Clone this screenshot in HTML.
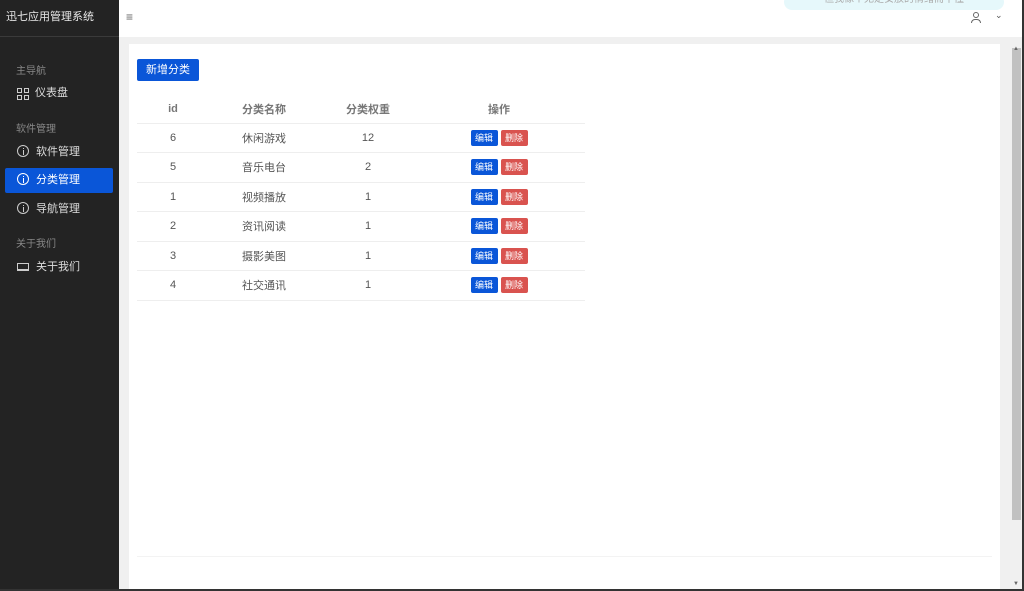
<!DOCTYPE html>
<html><head><meta charset="utf-8"><style>
*{margin:0;padding:0;box-sizing:border-box}
body{width:1024px;height:591px;overflow:hidden;background:#f0f0f0;font-family:"Liberation Sans","Noto Sans CJK SC",sans-serif;font-size:11px;position:relative;color:#555}
.side{position:absolute;left:0;top:0;width:119px;height:591px;background:#232323;color:#ddd}
.logo{height:37px;line-height:35px;padding-left:6px;font-size:11px;color:#e8e8e8;border-bottom:1px solid #3a3a3a}
.grp{position:absolute;left:16px;font-size:10px;color:#888}
.item{position:absolute;left:5px;width:108px;height:25px;line-height:25px;padding-left:12px;color:#ddd;font-size:11px}
.item.act{background:#0a56d8;color:#fff;border-radius:2px}
.ic{display:inline-block;width:12px;height:12px;border:1px solid #ccc;border-radius:50%;vertical-align:-2px;margin-right:7px;position:relative}
.ic:after{content:"";position:absolute;left:4.5px;top:4px;width:1px;height:5px;background:#ccc}
.ic:before{content:"";position:absolute;left:4.5px;top:2px;width:1px;height:1px;background:#ccc}
.act .ic{border-color:#fff}.act .ic:after,.act .ic:before{background:#fff}
.grid{position:absolute;left:12px;top:7px;width:12px;height:12px}
.grid i{position:absolute;width:5px;height:5px;border:1px solid #ccc;display:block}
.head{position:absolute;left:119px;top:0;width:905px;height:37px;background:#fff}
.card{position:absolute;left:129px;top:44px;width:871px;height:547px;background:#fff}
.btn{position:absolute;left:137px;top:59px;width:62px;height:22px;background:#0a56d8;color:#fff;border-radius:2px;text-align:center;line-height:22px;font-size:11px}
table{position:absolute;left:137px;top:95px;width:440px;border-collapse:collapse;table-layout:fixed}
td,th{height:29.5px;border-bottom:1px solid #eee;font-size:11px;color:#555}
th{font-weight:bold;color:#777;height:28px}
.e,.d{display:inline-block;width:27px;height:16px;line-height:16px;font-size:9px;color:#fff;border-radius:2px;margin:0 1.5px}
.e{background:#0a56d8}.d{background:#d9534f}
.sb{position:absolute;left:1010px;top:44px;width:12px;height:547px;background:#f0f0f0}
.th{position:absolute;left:1012px;top:48px;width:9px;height:472px;background:#c1c1c1}
</style></head><body>
<div class="side">
<div class="logo">迅七应用管理系统</div>
<div class="grp" style="top:62px">主导航</div>
<div class="item" style="top:81px;padding-left:30px"><span class="grid"><i style="left:0;top:0"></i><i style="left:7px;top:0"></i><i style="left:0;top:7px"></i><i style="left:7px;top:7px"></i></span>仪表盘</div>
<div class="grp" style="top:120px">软件管理</div>
<div class="item" style="top:140px"><span class="ic"></span>软件管理</div>
<div class="item act" style="top:168px"><span class="ic"></span>分类管理</div>
<div class="item" style="top:197px"><span class="ic"></span>导航管理</div>
<div class="grp" style="top:235px">关于我们</div>
<div class="item" style="top:255px"><span style="display:inline-block;width:12px;height:8px;border:1px solid #ccc;border-bottom-width:2px;margin-right:7px;vertical-align:-1px"></span>关于我们</div>
</div>
<div class="head">
<div style="position:absolute;left:7px;top:10px;font-size:12px;color:#666">≡</div>
<div style="position:absolute;left:665px;top:-6px;width:220px;height:16px;background:#e6f8fb;border-radius:8px;color:#aaa;font-size:10px;text-align:center;line-height:12px">但我像个无足安放的情绪而不懂</div>
<div style="position:absolute;left:852px;top:12px;width:10px;height:12px;"><div style="width:6px;height:6px;border:1px solid #666;border-radius:50%;margin-left:2px"></div><div style="width:10px;height:4px;border:1px solid #666;border-bottom:none;border-radius:5px 5px 0 0;margin-top:1px"></div></div>
<div style="position:absolute;left:876px;top:10px;font-size:9px;color:#555">⌄</div>
</div>
<div class="card">
<div style="position:absolute;left:8px;top:512px;width:855px;height:1px;background:#f3f3f3"></div>
</div>
<div class="btn">新增分类</div>
<table>
<colgroup><col style="width:72px"><col style="width:114px"><col style="width:90px"><col style="width:172px"></colgroup>
<tr><th>id</th><th style="text-align:left;padding-left:33px">分类名称</th><th>分类权重</th><th>操作</th></tr>
<tr><td align="center">6</td><td style="padding-left:33px">休闲游戏</td><td align="center">12</td><td align="center"><span class="e">编辑</span><span class="d">删除</span></td></tr>
<tr><td align="center">5</td><td style="padding-left:33px">音乐电台</td><td align="center">2</td><td align="center"><span class="e">编辑</span><span class="d">删除</span></td></tr>
<tr><td align="center">1</td><td style="padding-left:33px">视频播放</td><td align="center">1</td><td align="center"><span class="e">编辑</span><span class="d">删除</span></td></tr>
<tr><td align="center">2</td><td style="padding-left:33px">资讯阅读</td><td align="center">1</td><td align="center"><span class="e">编辑</span><span class="d">删除</span></td></tr>
<tr><td align="center">3</td><td style="padding-left:33px">摄影美图</td><td align="center">1</td><td align="center"><span class="e">编辑</span><span class="d">删除</span></td></tr>
<tr><td align="center">4</td><td style="padding-left:33px">社交通讯</td><td align="center">1</td><td align="center"><span class="e">编辑</span><span class="d">删除</span></td></tr>
</table>
<div class="sb"></div><div class="th"></div>
<div style="position:absolute;left:1013px;top:46px;font-size:6px;color:#666">▲</div>
<div style="position:absolute;left:1013px;top:581px;font-size:6px;color:#666">▼</div>
<div style="position:absolute;left:1022px;top:0;width:2px;height:591px;background:#333"></div>
<div style="position:absolute;left:0;top:589px;width:1024px;height:2px;background:#333"></div>
</body></html>
